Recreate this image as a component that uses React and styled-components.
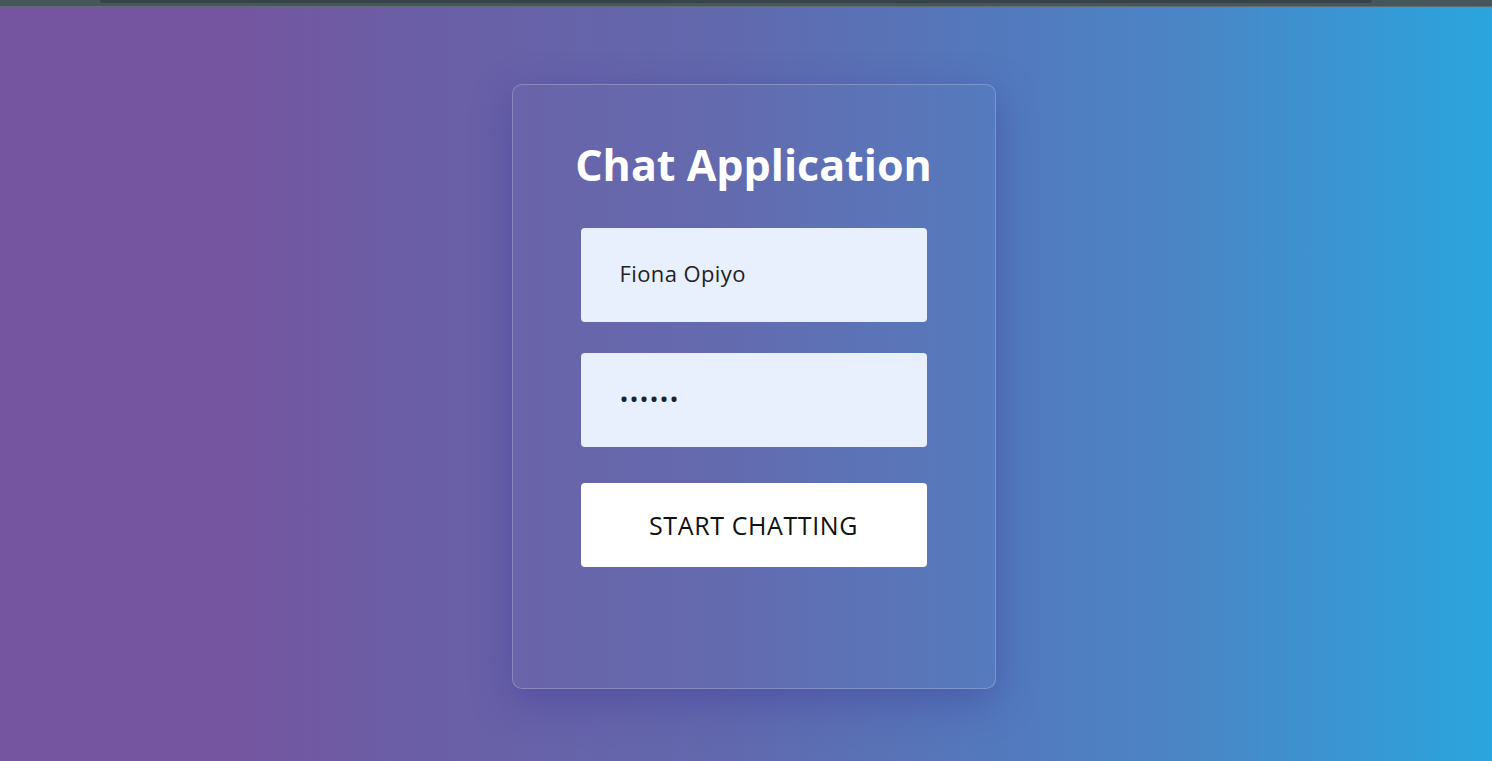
import React from "react";
import styled, { createGlobalStyle } from "styled-components";

const GlobalStyle = createGlobalStyle`
  * { box-sizing: border-box; }
  html, body { margin: 0; padding: 0; height: 100%; }
  body {
    font-family: "Open Sans", "Noto Sans", sans-serif;
    overflow: hidden;
  }
  #root { height: 100%; }
`;

const Page = styled.div`
  display: flex;
  flex-direction: column;
  height: 100vh;
  background: linear-gradient(
    to right,
    #7655a0 0%,
    #7555a0 16%,
    #6b5ea6 27%,
    #6268ad 48%,
    #5379bd 67%,
    #4a86c6 80%,
    #3a95d2 90%,
    #2aa5dd 100%
  );
`;

const TopStrip = styled.div`
  height: 7px;
  background: #46565d;
  border-bottom: 1px solid #5d6d72;
  padding: 0 120px 0 100px;
`;

const TopTab = styled.div`
  height: 3px;
  background: #384349;
  border-radius: 0 0 6px 6px;
`;

const Stage = styled.div`
  flex: 1;
  display: flex;
  justify-content: center;
  align-items: flex-start;
  padding: 77px 0 0 15px;
`;

const Card = styled.form`
  width: 484px;
  height: 605px;
  border-radius: 10px;
  border: 1px solid rgba(255, 255, 255, 0.22);
  background: rgba(255, 255, 255, 0.015);
  box-shadow: 0 12px 40px rgba(50, 40, 140, 0.35);
  display: flex;
  flex-direction: column;
  align-items: center;
  padding: 52px 68px 0;
`;

const Title = styled.h1`
  margin: 0 0 35px;
  color: #fff;
  white-space: nowrap;
  font-family: "Open Sans", sans-serif;
  font-weight: 700;
  font-size: 43px;
  letter-spacing: 0;
  line-height: 56px;
`;

const Field = styled.input`
  width: 346px;
  height: 94px;
  flex-shrink: 0;
  margin-bottom: ${({ $gap }) => $gap || "31px"};
  border: none;
  outline: none;
  border-radius: 4px;
  background: #e8f0fe;
  padding: 0 39px 4px;
  font-family: "Open Sans", sans-serif;
  font-size: ${({ type }) => (type === "password" ? "24px" : "22px")};
  letter-spacing: ${({ type }) => (type === "password" ? "1px" : "0.4px")};
  color: #222;
`;

const Button = styled.button`
  width: 346px;
  height: 84px;
  flex-shrink: 0;
  border: none;
  border-radius: 4px;
  background: #fff;
  color: #111;
  font-family: "Open Sans", sans-serif;
  font-size: 25px;
  letter-spacing: 0.6px;
  cursor: pointer;
`;

export default function App() {
  return (
    <Page>
      <GlobalStyle />
      <TopStrip>
        <TopTab />
      </TopStrip>
      <Stage>
        <Card onSubmit={(e) => e.preventDefault()}>
          <Title>Chat Application</Title>
          <Field type="text" defaultValue="Fiona Opiyo" />
          <Field type="password" defaultValue="123456" $gap="36px" />
          <Button type="submit">START CHATTING</Button>
        </Card>
      </Stage>
    </Page>
  );
}
